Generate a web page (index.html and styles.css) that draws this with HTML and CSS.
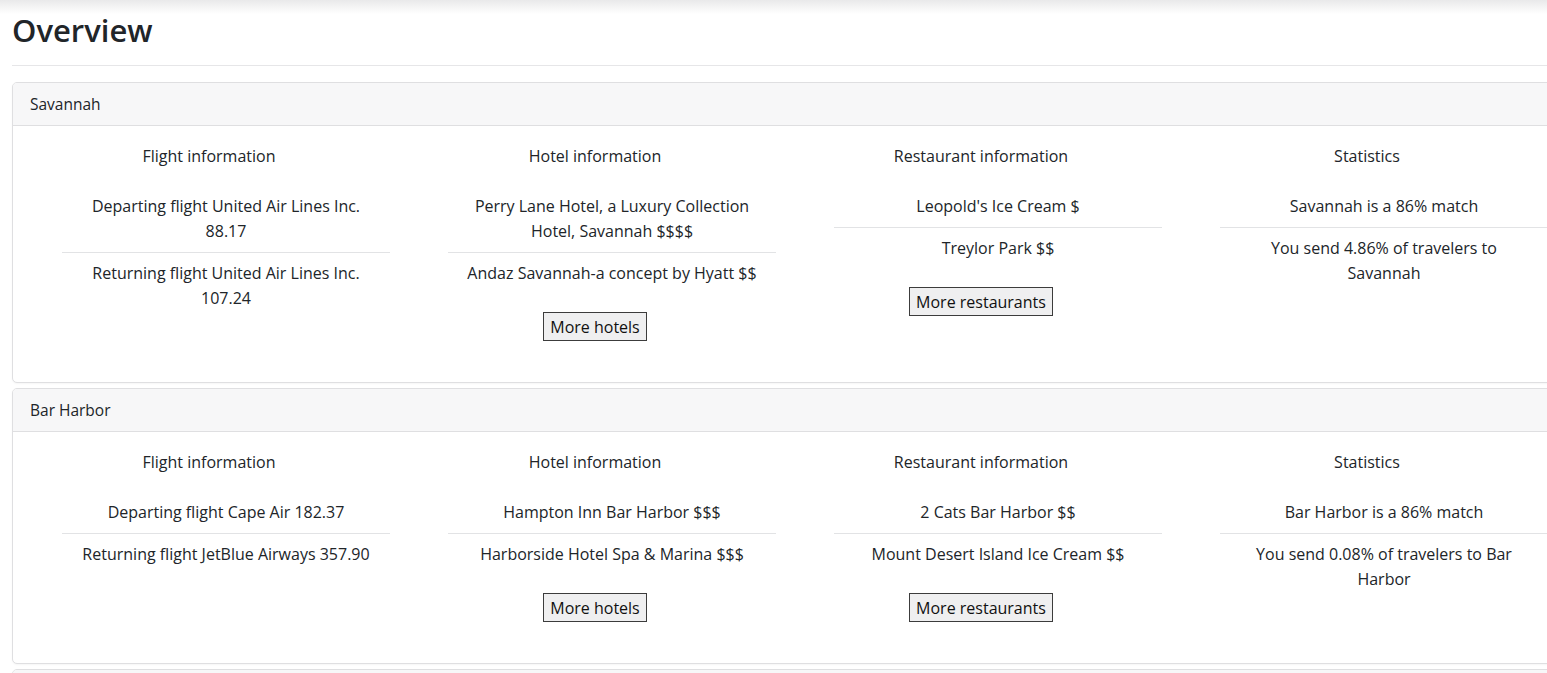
FILE: index.html
```html
<!DOCTYPE html>
<html lang="en">
<head>
<meta charset="utf-8">
<title>Overview</title>
<link rel="stylesheet" href="styles.css">
</head>
<body>
<main class="page">
  <h2 class="title">Overview</h2>
  <hr class="rule">

  <section class="card">
    <div class="card-header">Savannah</div>
    <div class="card-body">
      <div class="col">
        <div class="col-title">Flight information</div>
        <ul class="list">
          <li>Departing flight United Air Lines Inc. 88.17</li>
          <li>Returning flight United Air Lines Inc. 107.24</li>
        </ul>
      </div>
      <div class="col">
        <div class="col-title">Hotel information</div>
        <ul class="list">
          <li>Perry Lane Hotel, a Luxury Collection Hotel, Savannah $$$$</li>
          <li>Andaz Savannah-a concept by Hyatt $$</li>
        </ul>
        <button class="btn" type="button">More hotels</button>
      </div>
      <div class="col">
        <div class="col-title">Restaurant information</div>
        <ul class="list">
          <li>Leopold's Ice Cream $</li>
          <li>Treylor Park $$</li>
        </ul>
        <button class="btn" type="button">More restaurants</button>
      </div>
      <div class="col">
        <div class="col-title">Statistics</div>
        <ul class="list">
          <li>Savannah is a 86% match</li>
          <li>You send 4.86% of travelers to Savannah</li>
        </ul>
      </div>
    </div>
  </section>

  <section class="card">
    <div class="card-header">Bar Harbor</div>
    <div class="card-body">
      <div class="col">
        <div class="col-title">Flight information</div>
        <ul class="list">
          <li>Departing flight Cape Air 182.37</li>
          <li>Returning flight JetBlue Airways 357.90</li>
        </ul>
      </div>
      <div class="col">
        <div class="col-title">Hotel information</div>
        <ul class="list">
          <li>Hampton Inn Bar Harbor $$$</li>
          <li>Harborside Hotel Spa &amp; Marina $$$</li>
        </ul>
        <button class="btn" type="button">More hotels</button>
      </div>
      <div class="col">
        <div class="col-title">Restaurant information</div>
        <ul class="list">
          <li>2 Cats Bar Harbor $$</li>
          <li>Mount Desert Island Ice Cream $$</li>
        </ul>
        <button class="btn" type="button">More restaurants</button>
      </div>
      <div class="col">
        <div class="col-title">Statistics</div>
        <ul class="list">
          <li>Bar Harbor is a 86% match</li>
          <li>You send 0.08% of travelers to Bar Harbor</li>
        </ul>
      </div>
    </div>
  </section>

  <section class="card">
    <div class="card-header">&nbsp;</div>
  </section>
</main>
</body>
</html>
```

FILE: styles.css
```css
html, body {
  margin: 0;
  padding: 0;
}

body {
  font-family: "Open Sans", "Noto Sans", "Liberation Sans", sans-serif;
  font-size: 16px;
  line-height: 25px;
  color: #212529;
  background: #ffffff linear-gradient(to bottom, #e9e9ea 0px, #ffffff 14px) no-repeat;
  overflow-x: hidden;
}

.page {
  width: 1554px;
  padding: 11px 12px 0 12px;
}

.title {
  margin: 0;
  font-size: 31px;
  font-weight: 600;
  line-height: 38px;
  color: #212529;
}

.rule {
  margin: 16px 0 16px 0;
  border: 0;
  border-top: 1px solid #e6e6e8;
  height: 0;
}

.card {
  border: 1px solid #dfdfe1;
  border-radius: 5px;
  margin-bottom: 5px;
  background: #fff;
  box-shadow: 0 1px 2px rgba(0, 0, 0, 0.04);
  overflow: hidden;
}

.card-header {
  background: #f7f7f8;
  border-bottom: 1px solid #dfdfe1;
  padding: 9px 17px 8px 17px;
  font-size: 15.5px;
  line-height: 25px;
}

.card-body {
  display: grid;
  grid-template-columns: repeat(4, 386px);
  padding: 18px 0 41px 3px;
}

.col {
  display: flex;
  flex-direction: column;
  align-items: center;
  text-align: center;
}

.col-title {
  margin-bottom: 17px;
}

.list {
  list-style: none;
  margin: 0 12px 0 46px;
  padding: 0;
  align-self: stretch;
}

.list li {
  padding: 8px 16px;
}

.list li + li {
  border-top: 1px solid #e2e3e5;
}

.btn {
  margin-top: 18px;
  height: 29px;
  padding: 0 6px;
  font-family: inherit;
  font-size: 16px;
  color: #111;
  background: #efeff0;
  border: 1px solid #3c3c3c;
  border-radius: 0;
}
```
